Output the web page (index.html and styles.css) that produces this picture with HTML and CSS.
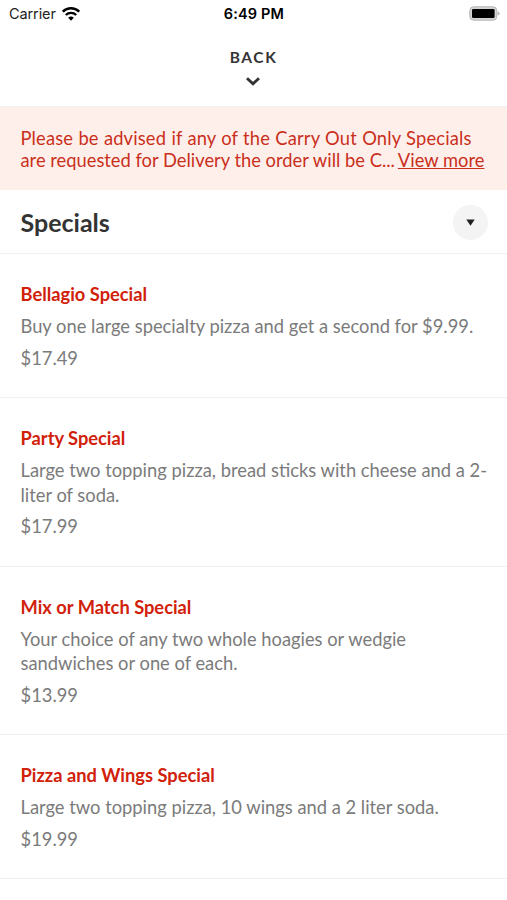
FILE: index.html
```html
<!DOCTYPE html>
<html lang="en">
<head>
  <meta charset="UTF-8">
  <meta name="viewport" content="width=device-width, initial-scale=1.0">
  <title>Specials</title>
  <link rel="stylesheet" href="styles.css">
</head>
<body>

<div class="status-bar">
  <div class="carrier">
    <span>Carrier</span>
    <svg class="wifi" width="18" height="14" viewBox="0 0 18 14">
      <path d="M0.8 4.7 A11.6 11.6 0 0 1 17.2 4.7" fill="none" stroke="#000" stroke-width="2.5"/>
      <path d="M3.8 8 A7.5 7.5 0 0 1 14.2 8" fill="none" stroke="#000" stroke-width="2.3"/>
      <path d="M9 13.7 L6.2 10.7 A4.2 4.2 0 0 1 11.8 10.7 Z"/>
    </svg>
  </div>
  <div class="time">6:49 PM</div>
  <svg class="battery" width="31" height="15" viewBox="0 0 31 15">
    <rect x="0.8" y="0.8" width="27" height="13.4" rx="3.8" fill="#d4d4d4" stroke="#b5b5b5"/>
    <rect x="3" y="3" width="22.6" height="9" rx="1.2"/>
    <path d="M28.6 5.2 Q30.7 6 30.7 7.5 Q30.7 9 28.6 9.8 Z" fill="#b5b5b5"/>
  </svg>
</div>

<header class="header">
  <div class="back">BACK</div>
  <svg width="14" height="9" viewBox="0 0 14 9">
    <path d="M1 1.3 L7 6.8 L13 1.3" fill="none" stroke="#333" stroke-width="2.9"/>
  </svg>
</header>

<div class="notice">
  <div class="notice-first">Please be advised if any of the Carry Out Only Specials</div>
  <div class="notice-row"><span>are requested for Delivery the order will be C...</span><a href="#">View more</a></div>
</div>

<div class="section-title">
  <h1>Specials</h1>
  <button class="toggle" aria-label="Toggle">
    <svg width="9" height="7" viewBox="0 0 9 7"><path d="M0.3 0.5 H8.7 L4.5 6.7 Z" fill="#222"/></svg>
  </button>
</div>

<div class="item">
  <h2>Bellagio Special</h2>
  <p>Buy one large specialty pizza and get a second for $9.99.</p>
  <div class="price">$17.49</div>
</div>
<div class="item">
  <h2>Party Special</h2>
  <p>Large two topping pizza, bread sticks with cheese and a 2-<br>liter of soda.</p>
  <div class="price">$17.99</div>
</div>
<div class="item">
  <h2>Mix or Match Special</h2>
  <p>Your choice of any two whole hoagies or wedgie<br>sandwiches or one of each.</p>
  <div class="price">$13.99</div>
</div>
<div class="item">
  <h2>Pizza and Wings Special</h2>
  <p>Large two topping pizza, 10 wings and a 2 liter soda.</p>
  <div class="price">$19.99</div>
</div>

</body>
</html>
```

FILE: styles.css
```css
* {
  box-sizing: border-box;
}
body {
  margin: 0;
  height: 900px;
  overflow: hidden;
  background-color: #fff;
  font-family: Lato, sans-serif;
  color: #333;
}
h1, h2, p {
  margin: 0;
}
.status-bar {
  height: 27px;
  padding: 0 7px 0 9px;
  display: grid;
  grid-template-columns: 1fr auto 1fr;
  align-items: center;
  font-family: Inter, sans-serif;
  font-size: 14.5px;
  color: #000;
}
.carrier {
  display: flex;
  align-items: center;
  gap: 6px;
  color: #222;
  letter-spacing: -0.1px;
}
.time {
  margin-right: 1px;
  font-weight: 600;
  letter-spacing: 0.15px;
}
.battery {
  justify-self: end;
}
.header {
  height: 80px;
  padding: 20px 1px 0 0;
  display: flex;
  flex-direction: column;
  align-items: center;
  gap: 10px;
  border-bottom: 1px solid #f1eeee;
}
.back {
  padding-left: 1px;
  font-size: 15.5px;
  line-height: 20px;
  font-weight: 700;
  letter-spacing: 1.6px;
}
.notice {
  height: 83px;
  padding: 20px 20px 0 20.5px;
  background-color: #ffefeb;
  color: #c9301c;
  font-size: 18.33px;
  line-height: 22px;
  white-space: nowrap;
}
.notice-first {
  letter-spacing: 0.16px;
  word-spacing: 0.4px;
}
.notice-row {
  display: flex;
  gap: 3px;
}
.notice a {
  color: inherit;
  text-decoration-skip-ink: none;
}
.section-title {
  height: 64px;
  padding: 1px 19px 0 20.5px;
  display: flex;
  align-items: center;
  justify-content: space-between;
  border-bottom: 1px solid #f1f1f1;
}
.section-title h1 {
  padding-bottom: 1px;
  font-size: 25px;
}
.toggle {
  width: 35px;
  height: 35px;
  padding: 0;
  display: flex;
  align-items: center;
  justify-content: center;
  border: none;
  border-radius: 50%;
  background-color: #f4f4f4;
}
.item {
  padding: 28px 20px 27px 20.5px;
  border-bottom: 1px solid #f1f1f1;
  font-size: 18.33px;
  line-height: 24.5px;
  color: #7b7b7b;
  white-space: nowrap;
}
.item h2 {
  margin-bottom: 8px;
  font-size: 18.3px;
  line-height: 24px;
  color: #d1210a;
}
.price {
  margin-top: 7px;
}
```
